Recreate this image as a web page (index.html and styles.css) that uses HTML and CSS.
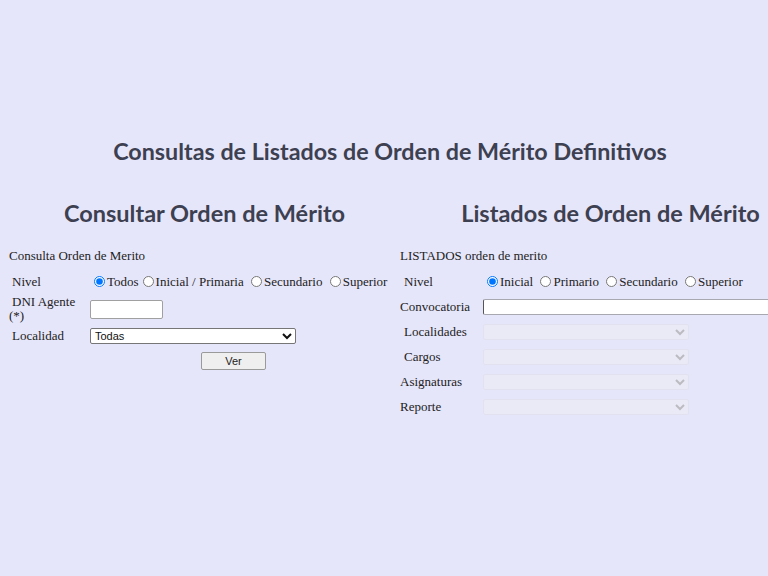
FILE: index.html
```html
<!DOCTYPE html>
<html lang="es">
<head>
<meta charset="utf-8">
<link rel="stylesheet" href="styles.css">
</head>
<body>
<div class="page">
  <h1 class="title">Consultas de Listados de Orden de Mérito Definitivos</h1>
  <div class="cols">
    <section class="col col-left">
      <h2 class="subtitle">Consultar Orden de Mérito</h2>
      <div class="caption">Consulta Orden de Merito</div>
      <table class="form form-left">
        <tr class="r-nivel">
          <td class="lbl pad">Nivel</td>
          <td class="radios">
            <label><input type="radio" name="n1" checked>Todos</label><label><input type="radio" name="n1">Inicial / Primaria</label> <label><input type="radio" name="n1">Secundario</label> <label><input type="radio" name="n1">Superior</label>
          </td>
        </tr>
        <tr class="r-dni">
          <td class="lbl dni"><span class="dni-top">DNI Agente</span><br>(*)</td>
          <td><input type="text" class="txt-short"></td>
        </tr>
        <tr class="r-loc">
          <td class="lbl pad">Localidad</td>
          <td><select class="sel-wide"><option>Todas</option></select></td>
        </tr>
        <tr class="r-btn">
          <td></td>
          <td class="btn-cell"><button class="btn">Ver</button></td>
        </tr>
      </table>
    </section>
    <section class="col col-right">
      <h2 class="subtitle">Listados de Orden de Mérito</h2>
      <div class="caption">LISTADOS orden de merito</div>
      <table class="form form-right">
        <tr>
          <td class="lbl pad">Nivel</td>
          <td class="radios">
            <label><input type="radio" name="n2" checked>Inicial</label> <label><input type="radio" name="n2">Primario</label> <label><input type="radio" name="n2">Secundario</label> <label><input type="radio" name="n2">Superior</label>
          </td>
        </tr>
        <tr>
          <td class="lbl">Convocatoria</td>
          <td><input type="text" class="txt-long"></td>
        </tr>
        <tr>
          <td class="lbl pad">Localidades</td>
          <td><select class="sel-dis" disabled><option></option></select></td>
        </tr>
        <tr>
          <td class="lbl pad">Cargos</td>
          <td><select class="sel-dis" disabled><option></option></select></td>
        </tr>
        <tr>
          <td class="lbl">Asignaturas</td>
          <td><select class="sel-dis" disabled><option></option></select></td>
        </tr>
        <tr>
          <td class="lbl">Reporte</td>
          <td><select class="sel-dis" disabled><option></option></select></td>
        </tr>
      </table>
    </section>
  </div>
</div>
</body>
</html>
```
FILE: styles.css
```css
html, body {
  margin: 0;
  padding: 0;
  background: #e6e6fa;
  overflow: hidden;
}
.page {
  width: 768px;
  height: 576px;
  padding-top: 136px;
  box-sizing: border-box;
  font-family: "Liberation Serif", serif;
  font-size: 13px;
  color: #222;
}
.title {
  margin: 0;
  padding-left: 12px;
  text-align: center;
  font-family: Lato, sans-serif;
  font-weight: 700;
  font-size: 23.3px;
  line-height: 30px;
  color: #3d4050;
  white-space: nowrap;
}
.cols {
  display: flex;
  margin-top: 34px;
}
.col-left {
  width: 390px;
  padding-left: 8px;
  flex: none;
}
.col-right {
  width: 423px;
  flex: none;
}
.subtitle {
  margin: 0;
  text-align: center;
  font-family: Lato, sans-serif;
  font-weight: 700;
  font-size: 23.5px;
  line-height: 26px;
  color: #3d4050;
  white-space: nowrap;
}
.col-left .subtitle { padding-left: 3px; }
.col-right .subtitle { padding-left: 2px; }
.caption {
  margin-top: 22px;
  padding-left: 1px;
  line-height: 15px;
}
.col-right .caption { padding-left: 2px; }
.form {
  border-collapse: collapse;
  border-spacing: 0;
  margin-top: 7px;
}
.form td {
  padding: 0 1px;
  vertical-align: middle;
  line-height: 14px;
}
.form-left { margin-top: 8px; }
.form-left .lbl { width: 76px; }
.r-nivel td, .r-loc td { height: 22px; }
.r-dni td { height: 32px; }
.r-btn td { height: 28px; }
.pad { padding-left: 4px !important; }
.dni { padding-left: 1px; }
.dni-top { padding-left: 3px; }
.radios { white-space: nowrap; }
input[type=radio] {
  width: 11px;
  height: 11px;
  margin: 0 2px 0 4px;
  vertical-align: -1px;
}
.txt-short {
  display: block;
  width: 73px;
  height: 19px;
  box-sizing: border-box;
  border: 1px solid #a0a0a0;
  border-radius: 2px;
  background: #fff;
  margin: 0;
}
.sel-wide {
  display: block;
  width: 206px;
  height: 16px;
  box-sizing: border-box;
  font-family: "Liberation Sans", Arial, sans-serif;
  font-size: 11px;
  border: 1px solid #767676;
  border-radius: 2px;
  background: #fff;
  color: #111;
  padding: 0;
  margin: 0;
}
.btn-cell { padding-left: 112px !important; }
.btn {
  display: block;
  width: 65px;
  height: 18px;
  font-family: "Liberation Sans", Arial, sans-serif;
  font-size: 11px;
  border: 1px solid #9a9a9a;
  border-radius: 2px;
  background: #efefef;
  color: #222;
  padding: 0;
}
.form-right { margin-top: 6px; margin-left: 1px; }
.form-right td { height: 25px; }
.form-right .lbl { width: 77px; }
.form-right .pad { padding-left: 5px !important; }
.txt-long {
  display: block;
  width: 320px;
  height: 16px;
  box-sizing: border-box;
  border: 1px solid #a8a8b0;
  border-left-color: #555;
  border-radius: 2px;
  background: #fff;
  margin: 0;
}
.sel-dis {
  display: block;
  width: 206px;
  height: 16px;
  box-sizing: border-box;
  border: 1px solid #e0e0ec;
  border-radius: 2px;
  background: #ececf6;
  margin: 0;
  color: #aaa;
}
```
